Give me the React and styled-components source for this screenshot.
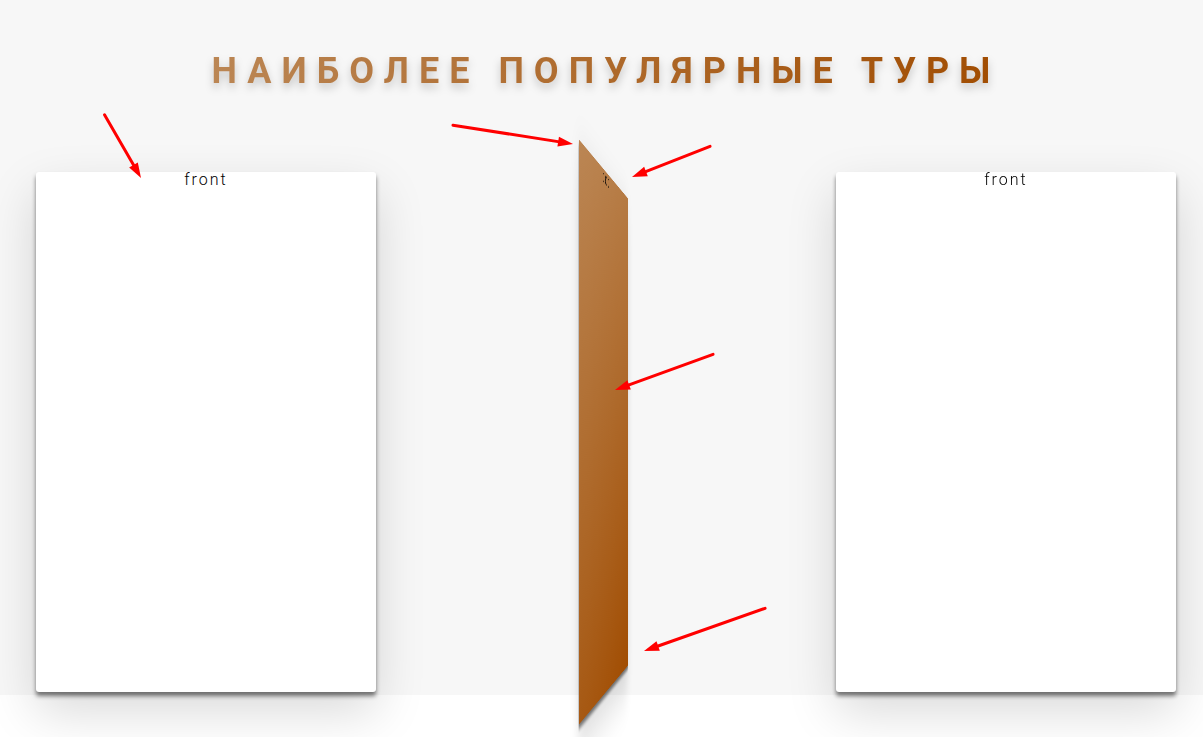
import React from "react";
import styled, { createGlobalStyle, css } from "styled-components";

const GlobalStyle = createGlobalStyle`
  *, *::before, *::after { box-sizing: border-box; }
  body {
    margin: 0;
    background: #fff;
    color: #000;
    font-family: Roboto, "Liberation Sans", sans-serif;
    font-size: 16px;
    font-weight: 300;
    line-height: 16px;
    letter-spacing: 2px;
  }
`;

const Page = styled.div`
  position: relative;
  min-height: 100vh;
`;

const Section = styled.section`
  padding: 50px 27px 3px 36px;
  background: #f7f7f7;
`;

const HeadingRow = styled.div`
  display: flex;
  justify-content: center;
  margin-bottom: 80px;
`;

const Heading = styled.h2`
  margin: 0;
  font-size: 36px;
  font-weight: 700;
  line-height: 42px;
  letter-spacing: 10px;
  text-transform: uppercase;
  color: transparent;
  background-image: linear-gradient(to right, #bb8654, #a14d02);
  background-clip: text;
  -webkit-background-clip: text;
  filter: drop-shadow(0 5px 4px rgba(0, 0, 0, 0.2));
`;

const Cards = styled.div`
  display: grid;
  grid-template-columns: repeat(3, 1fr);
  gap: 60px;
`;

const Card = styled.article`
  height: 520px;
  perspective: 1500px;
`;

const Side = styled.div`
  height: 100%;
  border-radius: 3px;
  text-align: center;
  background: #fff;
  box-shadow: 0 4px 4px rgba(0, 0, 0, 0.5), 0 20px 50px rgba(0, 0, 0, 0.15);
  ${({ $back }) =>
    $back &&
    css`
      background: linear-gradient(157deg, #bb8654, #a14d02);
      transform: rotateY(81.8deg);
    `}
`;

const Annotations = styled.svg`
  position: absolute;
  top: 0;
  left: 0;
  pointer-events: none;
`;

const arrows = [
  [104, 114, 141, 178],
  [452, 125, 573, 144],
  [711, 146, 632, 177],
  [714, 354, 615, 390],
  [766, 608, 644, 651],
];

function Arrow({ points: [x1, y1, x2, y2] }) {
  const angle = (Math.atan2(y2 - y1, x2 - x1) * 180) / Math.PI;
  const length = Math.hypot(x2 - x1, y2 - y1);
  return (
    <g transform={`translate(${x1} ${y1}) rotate(${angle})`}>
      <path d={`M1 0H${length - 12}`} stroke="#f00" strokeWidth="3" strokeLinecap="round" />
      <path d={`M${length} 0l-15 -5v10z`} fill="#f00" />
    </g>
  );
}

export default function App() {
  return (
    <Page>
      <GlobalStyle />
      <Section>
        <HeadingRow>
          <Heading>Наиболее популярные туры</Heading>
        </HeadingRow>
        <Cards>
          <Card>
            <Side>front</Side>
          </Card>
          <Card>
            <Side $back>back</Side>
          </Card>
          <Card>
            <Side>front</Side>
          </Card>
        </Cards>
      </Section>
      <Annotations width="780" height="700" aria-hidden="true">
        {arrows.map((points) => (
          <Arrow key={points.join()} points={points} />
        ))}
      </Annotations>
    </Page>
  );
}
